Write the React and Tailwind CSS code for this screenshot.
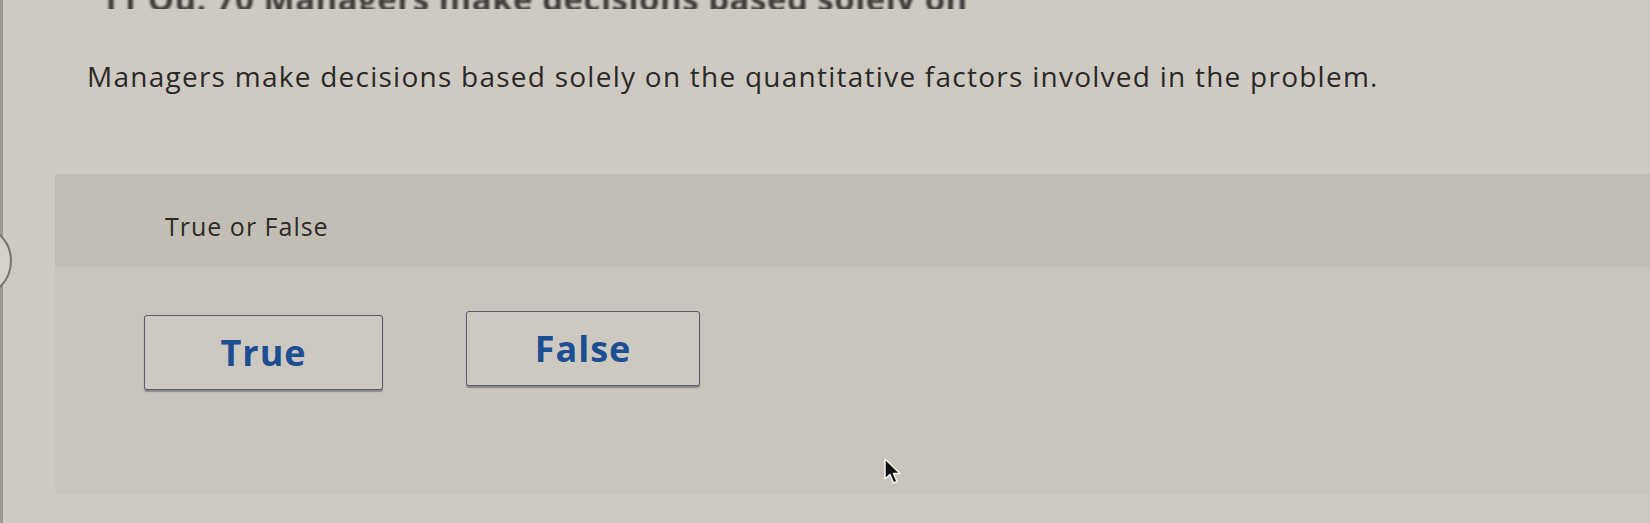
import React from "react";

const Cursor = () => (
  <svg width="22" height="28" viewBox="0 0 22 28" className="absolute left-[883px] top-[458px]">
    <path d="M2 1 L2 21 L7 16.5 L10.5 25 L14 23.5 L10.5 15.5 L17 15.5 Z" fill="#111" stroke="#f4f2ee" strokeWidth="1.5" strokeLinejoin="round" />
  </svg>
);

const AnswerButton = ({ label, className }) => (
  <button
    className={`h-[75px] rounded-[3px] border-[1.5px] border-[#585c6e] bg-[#cdc9c1] text-[36px] font-bold tracking-[1px] text-[#1c4e93] shadow-[0_1.5px_1px_rgba(60,60,80,0.45)] ${className}`}
  >
    {label}
  </button>
);

export default function App() {
  return (
    <div
      className="relative w-full h-[523px] overflow-hidden bg-[#cecac2] flex flex-col"
      style={{ fontFamily: '"Open Sans", "Liberation Sans", sans-serif' }}
    >
      {/* left window edge */}
      <div className="absolute left-0 top-0 h-full w-[3px] bg-[#9c9890]" />
      <div className="absolute left-[-62px] top-[224px] w-[74px] h-[74px] rounded-full border-2 border-[#74756d] bg-[#d4d1ca]" />

      {/* clipped question title */}
      <div className="h-[9px] overflow-hidden pl-[100px]">
        <p className="-mt-[26px] text-[33px] font-bold tracking-[0.5px] text-[#3f3d3a] blur-[1px] whitespace-nowrap">
          11 Qu. 70 Managers make decisions based solely on
        </p>
      </div>

      <p className="mt-[48px] pl-[87px] text-[28px] leading-[38px] tracking-[1.25px] text-[#2a2928] whitespace-nowrap">
        Managers make decisions based solely on the quantitative factors involved in the problem.
      </p>

      <div className="mt-[79px] ml-[55px] h-[320px] bg-[#c9c5bc] flex flex-col">
        <div className="h-[93px] bg-[#c3beb5] pl-[110px] pt-[35px]">
          <p className="text-[25px] leading-[34px] tracking-[1px] text-[#2c2b29]">True or False</p>
        </div>
        <div className="flex items-start pt-[46px] pl-[89px]">
          <AnswerButton label="True" className="w-[239px] mt-[2px]" />
          <AnswerButton label="False" className="w-[234px] ml-[83px] -mt-[2px]" />
        </div>
      </div>

      <Cursor />
    </div>
  );
}
